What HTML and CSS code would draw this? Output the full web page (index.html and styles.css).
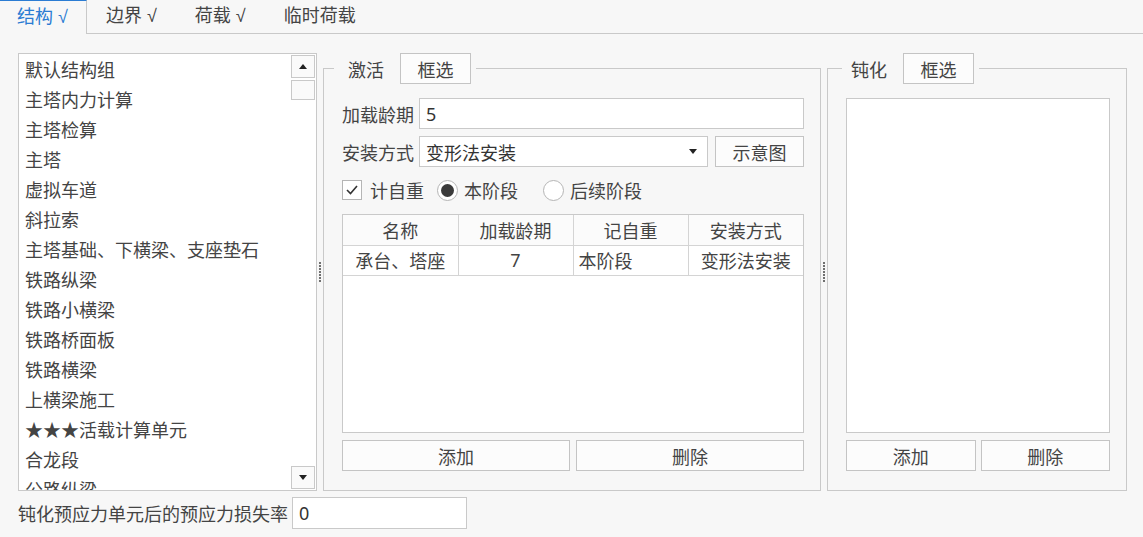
FILE: index.html
```html
<!DOCTYPE html>
<html lang="zh-CN">
<head>
    <meta charset="UTF-8">
    <meta name="viewport" content="width=device-width, initial-scale=1.0">
    <title>施工阶段</title>
    <link rel="stylesheet" href="styles.css">
</head>
<body>
    <!-- Tab strip -->
    <div class="tabs">
        <div class="tab active">结构 √</div>
        <div class="tab">边界 √</div>
        <div class="tab">荷载 √</div>
        <div class="tab">临时荷载</div>
    </div>

    <div class="page">
        <div class="panes">
            <!-- Structure groups -->
            <div class="listbox">
                <ul class="items">
                    <li>默认结构组</li>
                    <li>主塔内力计算</li>
                    <li>主塔检算</li>
                    <li>主塔</li>
                    <li>虚拟车道</li>
                    <li>斜拉索</li>
                    <li>主塔基础、下横梁、支座垫石</li>
                    <li>铁路纵梁</li>
                    <li>铁路小横梁</li>
                    <li>铁路桥面板</li>
                    <li>铁路横梁</li>
                    <li>上横梁施工</li>
                    <li>★★★活载计算单元</li>
                    <li>合龙段</li>
                    <li>公路纵梁</li>
                </ul>
                <div class="scrollbar">
                    <span class="sb-btn"><i class="arrow-up"></i></span>
                    <span class="sb-thumb"></span>
                    <span class="sb-track"></span>
                    <span class="sb-btn"><i class="arrow-down"></i></span>
                </div>
            </div>

            <div class="splitter"><i class="grip"></i></div>

            <!-- Activate -->
            <fieldset class="group activate">
                <legend><span class="legend-text">激活</span><button class="btn pick">框选</button></legend>

                <div class="field">
                    <label>加载龄期</label>
                    <input class="text" type="text" value="5">
                </div>
                <div class="field">
                    <label>安装方式</label>
                    <div class="select">变形法安装<i class="arrow-down"></i></div>
                    <button class="btn sketch">示意图</button>
                </div>

                <div class="checks">
                    <span class="check-item"><span class="checkbox">
                        <svg width="14" height="14" viewBox="0 0 14 14"><polyline points="2,7 5.5,10.5 12,3" fill="none" stroke="#333" stroke-width="1.6"/></svg>
                    </span>计自重</span>
                    <span class="check-item radio-item"><span class="radio on"></span>本阶段</span>
                    <span class="check-item radio-item"><span class="radio"></span>后续阶段</span>
                </div>

                <div class="grid">
                    <table>
                        <thead>
                            <tr><th>名称</th><th>加载龄期</th><th>记自重</th><th>安装方式</th></tr>
                        </thead>
                        <tbody>
                            <tr><td>承台、塔座</td><td>7</td><td class="left">本阶段</td><td>变形法安装</td></tr>
                        </tbody>
                    </table>
                </div>

                <div class="actions">
                    <button class="btn">添加</button>
                    <button class="btn">删除</button>
                </div>
            </fieldset>

            <div class="splitter"><i class="grip"></i></div>

            <!-- Deactivate -->
            <fieldset class="group deactivate">
                <legend><span class="legend-text">钝化</span><button class="btn pick">框选</button></legend>
                <div class="pick-list"></div>
                <div class="actions">
                    <button class="btn">添加</button>
                    <button class="btn">删除</button>
                </div>
            </fieldset>
        </div>

        <div class="loss-row">
            <label>钝化预应力单元后的预应力损失率</label>
            <input class="text loss" type="text" value="0">
        </div>
    </div>
</body>
</html>
```

FILE: styles.css
```css
* {
    margin: 0;
    padding: 0;
    box-sizing: border-box;
}

body {
    font-family: "Noto Sans", "Noto Sans CJK SC", sans-serif;
    font-size: 18px;
    color: #444;
    background: #f7f7f7;
    overflow: hidden;
}

/* tabs */
.tabs {
    display: flex;
    height: 34px;
    border-bottom: 1px solid #c9c9c9;
    font-family: "Liberation Sans", "Noto Sans CJK SC", sans-serif;
}

.tab {
    padding: 0 19px;
    line-height: 33px;
}

.tab.active {
    color: #2b7cd3;
    background: #f7f7f7;
    border-top: 1px solid #2b7cd3;
    border-right: 1px solid #c9c9c9;
    margin-bottom: -1px;
    padding: 0 18px 0 17px;
    line-height: 32px;
}

.page {
    padding: 19px 16px 0 18px;
}

.panes {
    display: flex;
    height: 438px;
}

/* structure list */
.listbox {
    width: 299px;
    display: flex;
    background: #fff;
    border: 1px solid #c9c9c9;
}

.items {
    flex: 1;
    list-style: none;
    overflow: hidden;
    padding: 1px 0 0 6px;
}

.items li {
    height: 30px;
    line-height: 30px;
    white-space: nowrap;
}

.scrollbar {
    width: 26px;
    display: flex;
    flex-direction: column;
    padding: 1px;
}

.sb-btn {
    height: 23px;
    display: flex;
    align-items: center;
    justify-content: center;
    background: #fafafa;
    border: 1px solid #c9c9c9;
}

.sb-thumb {
    height: 20px;
    margin-top: 2px;
    background: #fafafa;
    border: 1px solid #c9c9c9;
}

.sb-track {
    flex: 1;
}

.arrow-up,
.arrow-down {
    width: 0;
    height: 0;
    border-left: 4px solid transparent;
    border-right: 4px solid transparent;
}

.arrow-up {
    border-bottom: 5px solid #222;
}

.arrow-down {
    border-top: 5px solid #222;
}

/* splitters */
.splitter {
    width: 6px;
    display: flex;
    align-items: center;
    justify-content: center;
}

.grip {
    width: 2px;
    height: 20px;
    background: repeating-linear-gradient(#707070 0 2px, transparent 2px 3px);
}

/* group boxes */
.group {
    min-width: 0;
    display: flex;
    flex-direction: column;
    border: 1px solid #c9c9c9;
    padding: 14px 16px 19px 18px;
}

.activate {
    width: 498px;
}

.deactivate {
    width: 300px;
}

legend {
    display: flex;
    align-items: center;
    margin-left: -8px;
    padding: 0 5px 0 14px;
}

.deactivate legend {
    margin-left: -4px;
    padding-left: 9px;
}

.legend-text {
    margin-right: 16px;
}

.btn {
    height: 31px;
    font: inherit;
    color: inherit;
    background: #fcfcfc;
    border: 1px solid #c4c4c4;
}

.pick {
    width: 71px;
}

.field {
    display: flex;
    align-items: center;
    height: 31px;
    margin-bottom: 7px;
}

.field + .field {
    margin-bottom: 0;
}

.field label {
    width: 77px;
}

.text {
    height: 31px;
    font: inherit;
    color: #333;
    background: #fff;
    border: 1px solid #c9c9c9;
    padding-left: 6px;
    outline: none;
}

.field .text {
    flex: 1;
}

.select {
    flex: 1;
    height: 31px;
    display: flex;
    align-items: center;
    justify-content: space-between;
    padding: 0 10px 0 6px;
    color: #333;
    background: #fff;
    border: 1px solid #c9c9c9;
}

.sketch {
    width: 89px;
    margin-left: 7px;
}

/* checkbox and radios */
.checks {
    display: flex;
    align-items: center;
    height: 20px;
    margin: 13px 0 14px;
}

.check-item {
    display: inline-flex;
    align-items: center;
    gap: 8px;
}

.radio-item {
    gap: 6px;
    margin-left: 13px;
}

.radio-item + .radio-item {
    margin-left: 25px;
}

.checkbox {
    width: 20px;
    height: 20px;
    display: flex;
    align-items: center;
    justify-content: center;
    background: #fff;
    border: 1px solid #b5b5b5;
}

.radio {
    width: 21px;
    height: 21px;
    border-radius: 50%;
    background: #fff;
    border: 1px solid #b5b5b5;
    display: flex;
    align-items: center;
    justify-content: center;
}

.radio.on::after {
    content: "";
    width: 13px;
    height: 13px;
    border-radius: 50%;
    background: #3a3a3a;
}

/* stage table */
.grid {
    flex: 1;
    background: #fff;
    border: 1px solid #c9c9c9;
    margin-bottom: 7px;
}

table {
    width: 100%;
    border-collapse: collapse;
    table-layout: fixed;
}

th, td {
    height: 30px;
    font-weight: normal;
    text-align: center;
    white-space: nowrap;
    padding: 0 5px;
    border-right: 1px solid #d4d4d4;
    border-bottom: 1px solid #d4d4d4;
}

th {
    background: #fbfbfb;
}

th:last-child, td:last-child {
    border-right: none;
}

td.left {
    text-align: left;
}

.actions {
    display: grid;
    grid-template-columns: 1fr 1fr;
    gap: 6px;
}

.deactivate .actions {
    gap: 5px;
}

.pick-list {
    flex: 1;
    background: #fff;
    border: 1px solid #c9c9c9;
    margin-bottom: 7px;
}

/* loss ratio */
.loss-row {
    display: flex;
    align-items: center;
    margin-top: 6px;
}

.loss {
    width: 175px;
    height: 32px;
    margin-left: 4px;
}
```
